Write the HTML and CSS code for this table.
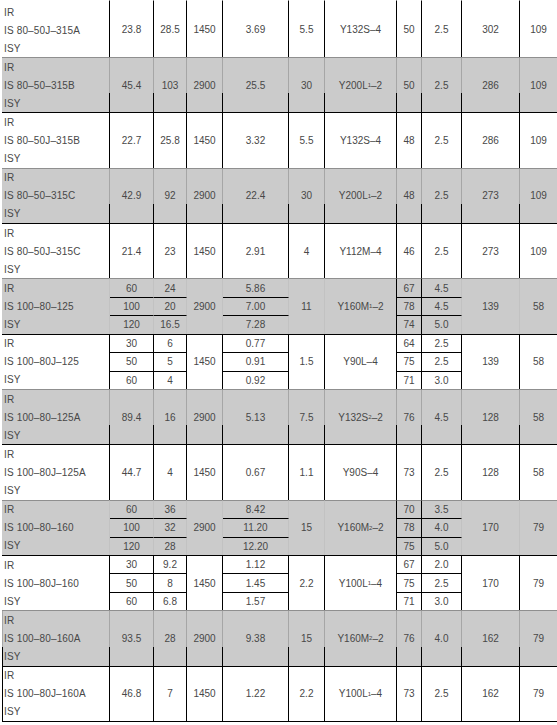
FILE: index.html
```html
<!DOCTYPE html>
<html>
<head>
<meta charset="utf-8">
<link rel="stylesheet" href="styles.css">
</head>
<body>
<div class="sheet">
  <!-- 1 -->
  <div class="c name first"><span>IR</span><span>IS 80–50J–315A</span><span>ISY</span></div>
  <div class="c s3 first">23.8</div><div class="c s3 first">28.5</div><div class="c s3 first">1450</div><div class="c s3 first">3.69</div><div class="c s3 first">5.5</div><div class="c s3 first">Y132S–4</div><div class="c s3 first">50</div><div class="c s3 first">2.5</div><div class="c s3 first">302</div><div class="c s3 first">109</div>
  <!-- 2 -->
  <div class="c name g"><span>IR</span><span>IS 80–50–315B</span><span>ISY</span></div>
  <div class="c s3 g">45.4</div><div class="c s3 g">103</div><div class="c s3 g">2900</div><div class="c s3 g">25.5</div><div class="c s3 g">30</div><div class="c s3 g">Y200L<sub>1</sub>–2</div><div class="c s3 g">50</div><div class="c s3 g">2.5</div><div class="c s3 g">286</div><div class="c s3 g">109</div>
  <!-- 3 -->
  <div class="c name"><span>IR</span><span>IS 80–50J–315B</span><span>ISY</span></div>
  <div class="c s3">22.7</div><div class="c s3">25.8</div><div class="c s3">1450</div><div class="c s3">3.32</div><div class="c s3">5.5</div><div class="c s3">Y132S–4</div><div class="c s3">48</div><div class="c s3">2.5</div><div class="c s3">286</div><div class="c s3">109</div>
  <!-- 4 -->
  <div class="c name g"><span>IR</span><span>IS 80–50–315C</span><span>ISY</span></div>
  <div class="c s3 g">42.9</div><div class="c s3 g">92</div><div class="c s3 g">2900</div><div class="c s3 g">22.4</div><div class="c s3 g">30</div><div class="c s3 g">Y200L<sub>1</sub>–2</div><div class="c s3 g">48</div><div class="c s3 g">2.5</div><div class="c s3 g">273</div><div class="c s3 g">109</div>
  <!-- 5 -->
  <div class="c name"><span>IR</span><span>IS 80–50J–315C</span><span>ISY</span></div>
  <div class="c s3">21.4</div><div class="c s3">23</div><div class="c s3">1450</div><div class="c s3">2.91</div><div class="c s3">4</div><div class="c s3">Y112M–4</div><div class="c s3">46</div><div class="c s3">2.5</div><div class="c s3">273</div><div class="c s3">109</div>
  <!-- 6 gray multi -->
  <div class="c name gm top"><span>IR</span><span>IS 100–80–125</span><span>ISY</span></div>
  <div class="c gm top">60</div><div class="c gm top">24</div><div class="c s3 gm top">2900</div><div class="c gm top">5.86</div><div class="c s3 gm top">11</div><div class="c s3 gm top k">Y160M<sub>1</sub>–2</div><div class="c gm top k">67</div><div class="c gm top">4.5</div><div class="c s3 gm top">139</div><div class="c s3 gm top">58</div>
  <div class="c gm">100</div><div class="c gm">20</div><div class="c gm">7.00</div><div class="c gm k">78</div><div class="c gm">4.5</div>
  <div class="c gm">120</div><div class="c gm">16.5</div><div class="c gm">7.28</div><div class="c gm k">74</div><div class="c gm">5.0</div>
  <!-- 7 white multi -->
  <div class="c name"><span>IR</span><span>IS 100–80J–125</span><span>ISY</span></div>
  <div class="c">30</div><div class="c">6</div><div class="c s3">1450</div><div class="c">0.77</div><div class="c s3">1.5</div><div class="c s3">Y90L–4</div><div class="c">64</div><div class="c">2.5</div><div class="c s3">139</div><div class="c s3">58</div>
  <div class="c">50</div><div class="c">5</div><div class="c">0.91</div><div class="c">75</div><div class="c">2.5</div>
  <div class="c">60</div><div class="c">4</div><div class="c">0.92</div><div class="c">71</div><div class="c">3.0</div>
  <!-- 8 -->
  <div class="c name g"><span>IR</span><span>IS 100–80–125A</span><span>ISY</span></div>
  <div class="c s3 g">89.4</div><div class="c s3 g">16</div><div class="c s3 g">2900</div><div class="c s3 g">5.13</div><div class="c s3 g">7.5</div><div class="c s3 g">Y132S<sub>2</sub>–2</div><div class="c s3 g">76</div><div class="c s3 g">4.5</div><div class="c s3 g">128</div><div class="c s3 g">58</div>
  <!-- 9 -->
  <div class="c name"><span>IR</span><span>IS 100–80J–125A</span><span>ISY</span></div>
  <div class="c s3">44.7</div><div class="c s3">4</div><div class="c s3">1450</div><div class="c s3">0.67</div><div class="c s3">1.1</div><div class="c s3">Y90S–4</div><div class="c s3">73</div><div class="c s3">2.5</div><div class="c s3">128</div><div class="c s3">58</div>
  <!-- 10 gray multi -->
  <div class="c name gm top"><span>IR</span><span>IS 100–80–160</span><span>ISY</span></div>
  <div class="c gm top">60</div><div class="c gm top">36</div><div class="c s3 gm top">2900</div><div class="c gm top">8.42</div><div class="c s3 gm top">15</div><div class="c s3 gm top k">Y160M<sub>2</sub>–2</div><div class="c gm top k">70</div><div class="c gm top">3.5</div><div class="c s3 gm top">170</div><div class="c s3 gm top">79</div>
  <div class="c gm">100</div><div class="c gm">32</div><div class="c gm">11.20</div><div class="c gm k">78</div><div class="c gm">4.0</div>
  <div class="c gm">120</div><div class="c gm">28</div><div class="c gm">12.20</div><div class="c gm k">75</div><div class="c gm">5.0</div>
  <!-- 11 white multi -->
  <div class="c name"><span>IR</span><span>IS 100–80J–160</span><span>ISY</span></div>
  <div class="c">30</div><div class="c">9.2</div><div class="c s3">1450</div><div class="c">1.12</div><div class="c s3">2.2</div><div class="c s3">Y100L<sub>1</sub>–4</div><div class="c">67</div><div class="c">2.0</div><div class="c s3">170</div><div class="c s3">79</div>
  <div class="c">50</div><div class="c">8</div><div class="c">1.45</div><div class="c">75</div><div class="c">2.5</div>
  <div class="c">60</div><div class="c">6.8</div><div class="c">1.57</div><div class="c">71</div><div class="c">3.0</div>
  <!-- 12 -->
  <div class="c name g lb"><span>IR</span><span>IS 100–80–160A</span><span>ISY</span></div>
  <div class="c s3 g">93.5</div><div class="c s3 g">28</div><div class="c s3 g">2900</div><div class="c s3 g">9.38</div><div class="c s3 g">15</div><div class="c s3 g">Y160M<sub>2</sub>–2</div><div class="c s3 g">76</div><div class="c s3 g">4.0</div><div class="c s3 g">162</div><div class="c s3 g">79</div>
  <!-- 13 -->
  <div class="c name lb"><span>IR</span><span>IS 100–80J–160A</span><span>ISY</span></div>
  <div class="c s3">46.8</div><div class="c s3">7</div><div class="c s3">1450</div><div class="c s3">1.22</div><div class="c s3">2.2</div><div class="c s3">Y100L<sub>1</sub>–4</div><div class="c s3">73</div><div class="c s3">2.5</div><div class="c s3">162</div><div class="c s3">79</div>
</div>
</body>
</html>
```
FILE: styles.css
```css
html, body {
  margin: 0;
  padding: 0;
  background: #ffffff;
}

body {
  font-family: "Liberation Sans", Arial, sans-serif;
  font-size: 10px;
  color: #484848;
  overflow: hidden;
}

.sheet {
  margin-left: 2px;
  width: 556px;
  height: 721px;
  display: grid;
  grid-template-columns: 108px 44px 33px 36px 66px 36px 72px 25px 40px 58px 38px;
  grid-template-rows: repeat(3, 19px) repeat(36, 1fr);
  border-bottom: 1px solid #000;
}

.c {
  box-sizing: border-box;
  border-top: 1px solid #000;
  border-right: 1px solid #000;
  display: flex;
  align-items: center;
  justify-content: center;
  white-space: nowrap;
  min-width: 0;
  min-height: 0;
}

.s3 {
  grid-row: span 3;
}

.first {
  border-top-color: transparent;
}

.name {
  grid-row: span 3;
  display: grid;
  grid-template-rows: repeat(3, 1fr);
  align-items: center;
  justify-content: start;
  padding-left: 2px;
  letter-spacing: 0.15px;
}

.name.first {
  padding-top: 2px;
}

.name.lb {
  border-left: 1px solid #000;
  padding-left: 1px;
}

.g {
  background: #cbcbcb;
  border-image: linear-gradient(#8f8f8f 0 1px, #a6a6a6 1px 65%, #000 65%) 1;
}

.gm {
  background: #cbcbcb;
  border-right-color: #c2c2c2;
}

.gm.top {
  border-top-color: #8f8f8f;
}

.gm.k {
  border-right-color: #000;
}

sub {
  font-size: 6px;
  vertical-align: -1px;
  line-height: 0;
}
```
